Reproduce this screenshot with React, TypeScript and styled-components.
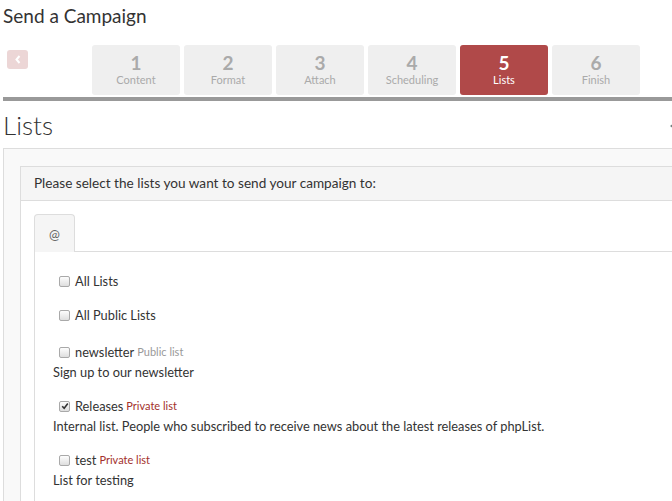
import React from 'react';
import styled, { createGlobalStyle } from 'styled-components';

const GlobalStyle = createGlobalStyle`
  html, body {
    margin: 0;
    padding: 0;
    background: #fff;
    overflow: hidden;
  }
  body {
    font-family: Lato, "Liberation Sans", sans-serif;
    color: #333;
  }
`;

const Page = styled.div`
  width: 700px;
  padding-left: 3px;
`;

const Title = styled.h1`
  margin: 0;
  padding-top: 4px;
  font-size: 19px;
  font-weight: 400;
  line-height: 24px;
  color: #333;
`;

const StepBar = styled.div`
  display: flex;
  align-items: flex-start;
  margin-top: 17px;
`;

const BackButton = styled.button`
  width: 21px;
  height: 19px;
  margin: 5px 0 0 4px;
  padding: 0;
  border: none;
  border-radius: 3px;
  background: #ecd6d6;
  display: flex;
  align-items: center;
  justify-content: center;
  cursor: pointer;
`;

const Steps = styled.div`
  display: flex;
  gap: 4px;
  margin-left: 64px;
`;

const Step = styled.div<{ $active?: boolean }>`
  width: 88px;
  height: 50px;
  border-radius: 3px;
  background: ${({ $active }) => ($active ? '#b04949' : '#efefef')};
  color: ${({ $active }) => ($active ? '#fff' : '#aaa')};
  display: flex;
  flex-direction: column;
  align-items: center;
  justify-content: center;

  .num {
    font-size: 19px;
    font-weight: 700;
    line-height: 20px;
  }

  .label {
    font-size: 11px;
    line-height: 14px;
  }
`;

const Rule = styled.div`
  height: 4px;
  margin-top: 2px;
  background: #999;
`;

const HeadingRow = styled.div`
  display: flex;
  align-items: center;
  justify-content: space-between;
  height: 47px;
  padding-right: 28px;

  h2 {
    margin: 0;
    font-size: 26px;
    font-weight: 300;
    color: #333;
  }
`;

const Caret = styled.span`
  width: 0;
  height: 0;
  border-top: 4px solid transparent;
  border-bottom: 4px solid transparent;
  border-right: 5px solid #6f7d7d;
  margin-top: 2px;
`;

const OuterPanel = styled.div`
  border: 1px solid #ddd;
  background: #f9f9f9;
  padding: 17px 0 0 16px;
`;

const InnerPanel = styled.div`
  border: 1px solid #ddd;
  border-right: none;
  background: #fff;
`;

const InnerHeader = styled.div`
  background: #f5f5f5;
  border-bottom: 1px solid #ddd;
  height: 33px;
  line-height: 33px;
  padding-left: 13px;
  font-size: 13.6px;
  color: #333;
`;

const InnerBody = styled.div`
  padding: 13px 0 0 13px;
`;

const TabList = styled.div`
  display: flex;
  border-bottom: 1px solid #ddd;
`;

const Tab = styled.div`
  width: 39px;
  height: 37px;
  margin-bottom: -1px;
  border: 1px solid #ddd;
  border-bottom: none;
  border-radius: 4px 4px 0 0;
  background: #f5f5f5;
  display: flex;
  align-items: center;
  justify-content: center;
  font-size: 13px;
  color: #666;
`;

const TabPane = styled.div`
  border-left: 1px solid #ddd;
  padding: 19px 0 20px 18px;
  display: flex;
  flex-direction: column;
  gap: 14px;
`;

const AllSection = styled.div`
  display: flex;
  flex-direction: column;
  gap: 14px;
  margin-bottom: 3px;
`;

const ListGroup = styled.div`
  font-size: 12.8px;
  line-height: 20px;
  color: #333;
`;

const OptionLabel = styled.label`
  display: flex;
  align-items: center;
  font-size: 12.8px;
  line-height: 20px;
  color: #333;
`;

const Box = styled.span<{ $checked?: boolean }>`
  box-sizing: border-box;
  width: 11px;
  height: 11px;
  margin: 0 5px 0 6px;
  border: 1px solid #a9a9a9;
  border-radius: 2px;
  background: linear-gradient(#fdfdfd, #dedede);
  display: inline-flex;
  align-items: center;
  justify-content: center;
`;

const Tag = styled.span<{ $private?: boolean }>`
  margin-left: 3px;
  font-size: 11px;
  color: ${({ $private }) => ($private ? '#a3302c' : '#999')};
`;

const Checkbox = ({ checked }: { checked?: boolean }) => (
  <Box $checked={checked}>
    {checked && (
      <svg width="8" height="8" viewBox="0 0 8 8">
        <path d="M1.2 4.2 L3.2 6.2 L6.8 1.6" fill="none" stroke="#333" strokeWidth="1.6" />
      </svg>
    )}
  </Box>
);

const steps = [
  { n: 1, label: 'Content' },
  { n: 2, label: 'Format' },
  { n: 3, label: 'Attach' },
  { n: 4, label: 'Scheduling' },
  { n: 5, label: 'Lists' },
  { n: 6, label: 'Finish' },
];

const lists = [
  { name: 'newsletter', tag: 'Public list', isPrivate: false, checked: false, desc: 'Sign up to our newsletter' },
  {
    name: 'Releases',
    tag: 'Private list',
    isPrivate: true,
    checked: true,
    desc: 'Internal list. People who subscribed to receive news about the latest releases of phpList.',
  },
  { name: 'test', tag: 'Private list', isPrivate: true, checked: false, desc: 'List for testing' },
];

const App: React.FC = () => {
  return (
    <Page>
      <GlobalStyle />
      <Title>Send a Campaign</Title>

      <StepBar>
        <BackButton aria-label="Back">
          <svg width="8" height="9" viewBox="0 0 8 9">
            <path d="M5.5 1 L2.5 4.5 L5.5 8" fill="none" stroke="#fff" strokeWidth="2" />
          </svg>
        </BackButton>
        <Steps>
          {steps.map((s) => (
            <Step key={s.n} $active={s.n === 5}>
              <span className="num">{s.n}</span>
              <span className="label">{s.label}</span>
            </Step>
          ))}
        </Steps>
      </StepBar>
      <Rule />

      <HeadingRow>
        <h2>Lists</h2>
        <Caret />
      </HeadingRow>

      <OuterPanel>
        <InnerPanel>
          <InnerHeader>Please select the lists you want to send your campaign to:</InnerHeader>
          <InnerBody>
            <TabList>
              <Tab>@</Tab>
            </TabList>
            <TabPane>
              <AllSection>
                <OptionLabel>
                  <Checkbox />
                  All Lists
                </OptionLabel>
                <OptionLabel>
                  <Checkbox />
                  All Public Lists
                </OptionLabel>
              </AllSection>
              {lists.map((l) => (
                <ListGroup key={l.name}>
                  <OptionLabel>
                    <Checkbox checked={l.checked} />
                    {l.name}
                    <Tag $private={l.isPrivate}>{l.tag}</Tag>
                  </OptionLabel>
                  <div>{l.desc}</div>
                </ListGroup>
              ))}
            </TabPane>
          </InnerBody>
        </InnerPanel>
      </OuterPanel>
    </Page>
  );
};

export default App;
